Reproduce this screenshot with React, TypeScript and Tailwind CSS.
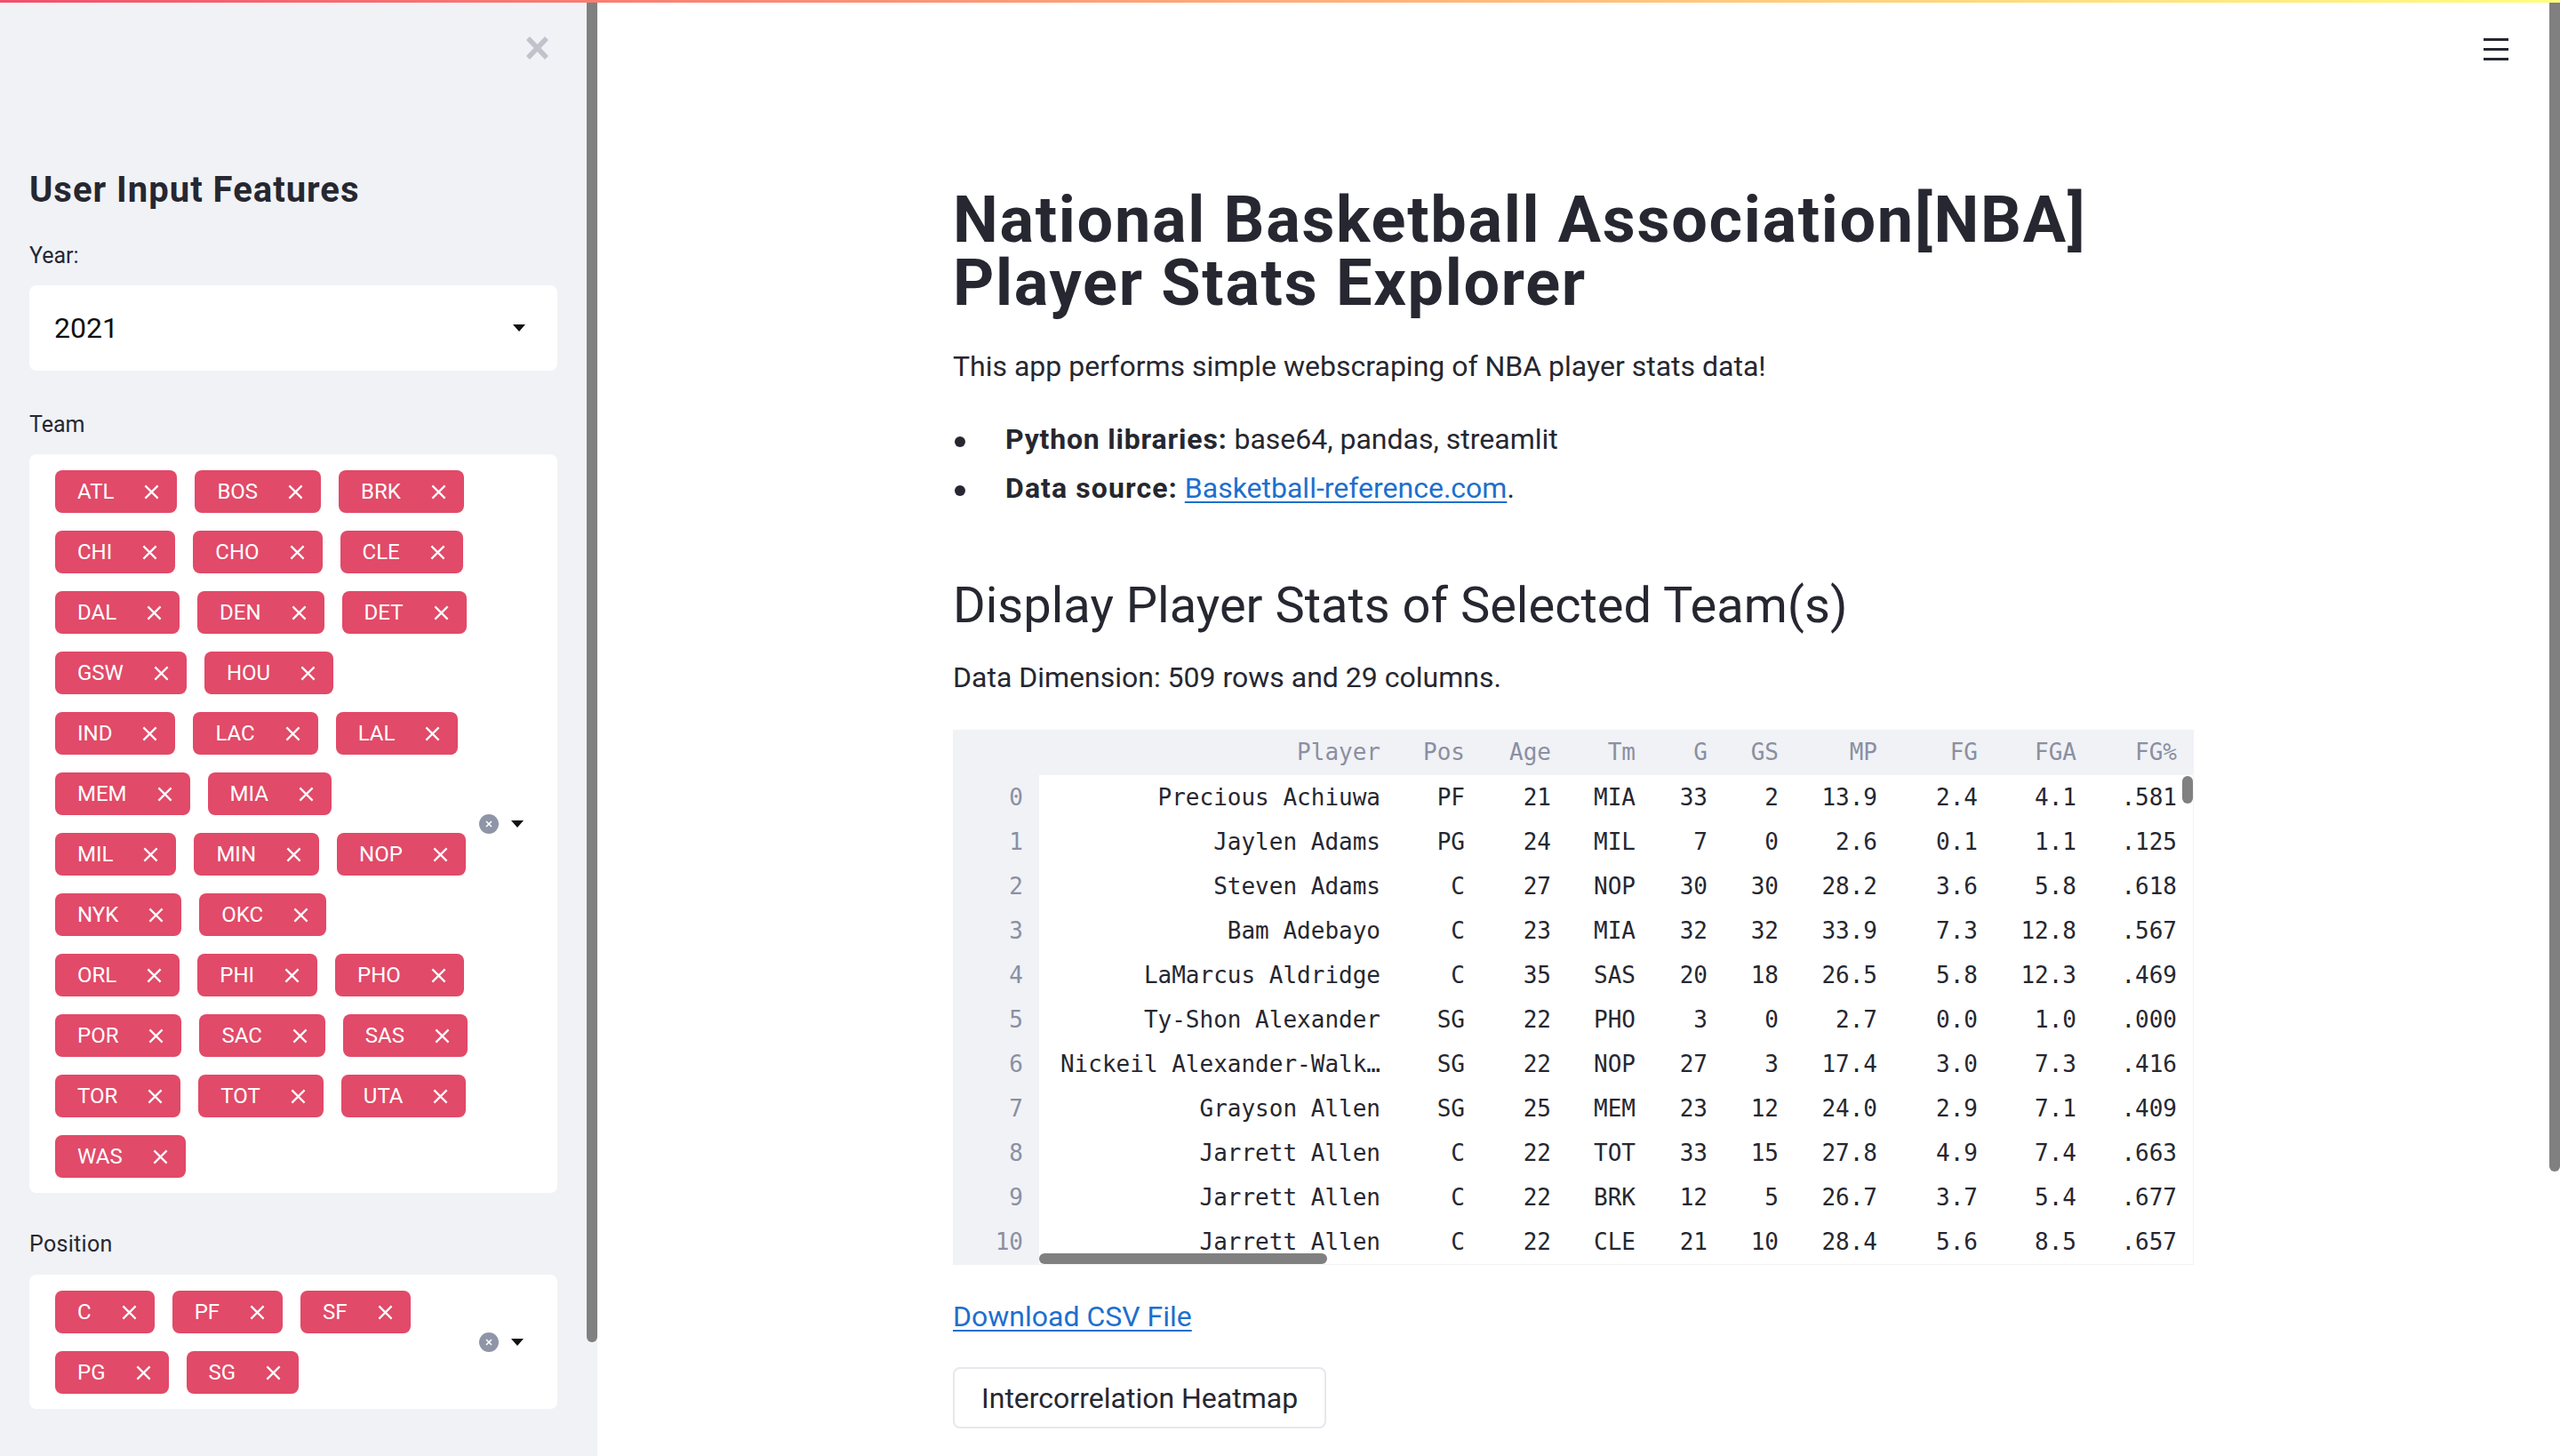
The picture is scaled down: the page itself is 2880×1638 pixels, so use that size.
import React from "react";

const teamRows: string[][] = [
  ["ATL", "BOS", "BRK"],
  ["CHI", "CHO", "CLE"],
  ["DAL", "DEN", "DET"],
  ["GSW", "HOU"],
  ["IND", "LAC", "LAL"],
  ["MEM", "MIA"],
  ["MIL", "MIN", "NOP"],
  ["NYK", "OKC"],
  ["ORL", "PHI", "PHO"],
  ["POR", "SAC", "SAS"],
  ["TOR", "TOT", "UTA"],
  ["WAS"],
];

const posRows: string[][] = [
  ["C", "PF", "SF"],
  ["PG", "SG"],
];

const cols: { name: string; cls: string }[] = [
  { name: "Player", cls: "w-[402px]" },
  { name: "Pos", cls: "w-[95px]" },
  { name: "Age", cls: "w-[97px]" },
  { name: "Tm", cls: "w-[95px]" },
  { name: "G", cls: "w-[81px]" },
  { name: "GS", cls: "w-[80px]" },
  { name: "MP", cls: "w-[111px]" },
  { name: "FG", cls: "w-[113px]" },
  { name: "FGA", cls: "w-[111px]" },
  { name: "FG%", cls: "w-[113px]" },
];

const rows: string[][] = [
  ["Precious Achiuwa", "PF", "21", "MIA", "33", "2", "13.9", "2.4", "4.1", ".581"],
  ["Jaylen Adams", "PG", "24", "MIL", "7", "0", "2.6", "0.1", "1.1", ".125"],
  ["Steven Adams", "C", "27", "NOP", "30", "30", "28.2", "3.6", "5.8", ".618"],
  ["Bam Adebayo", "C", "23", "MIA", "32", "32", "33.9", "7.3", "12.8", ".567"],
  ["LaMarcus Aldridge", "C", "35", "SAS", "20", "18", "26.5", "5.8", "12.3", ".469"],
  ["Ty-Shon Alexander", "SG", "22", "PHO", "3", "0", "2.7", "0.0", "1.0", ".000"],
  ["Nickeil Alexander-Walk\u2026", "SG", "22", "NOP", "27", "3", "17.4", "3.0", "7.3", ".416"],
  ["Grayson Allen", "SG", "25", "MEM", "23", "12", "24.0", "2.9", "7.1", ".409"],
  ["Jarrett Allen", "C", "22", "TOT", "33", "15", "27.8", "4.9", "7.4", ".663"],
  ["Jarrett Allen", "C", "22", "BRK", "12", "5", "26.7", "3.7", "5.4", ".677"],
  ["Jarrett Allen", "C", "22", "CLE", "21", "10", "28.4", "5.6", "8.5", ".657"],
];

function Pill({ label }: { label: string }) {
  return (
    <div className="flex h-[48px] items-center rounded-[8px] bg-[#e14a68] pl-[25px] pr-[19px] text-[24px] leading-none text-white">
      <span>{label}</span>
      <svg viewBox="0 0 20 20" className="ml-[33px] h-[19px] w-[19px]">
        <path d="M2.5 2.5 L17.5 17.5 M17.5 2.5 L2.5 17.5" stroke="white" strokeWidth="2.4" fill="none" />
      </svg>
    </div>
  );
}

function ClearAndArrow() {
  return (
    <div className="flex items-center gap-[14px] pr-[38px]">
      <div className="flex h-[22px] w-[22px] items-center justify-center rounded-full bg-[#8f95a6]">
        <svg viewBox="0 0 10 10" className="h-[10px] w-[10px]">
          <path d="M2 2 L8 8 M8 2 L2 8" stroke="white" strokeWidth="1.6" fill="none" />
        </svg>
      </div>
      <svg viewBox="0 0 14 8" className="h-[8px] w-[14px]">
        <polygon points="0,0 14,0 7,8" fill="#111111" />
      </svg>
    </div>
  );
}

function MultiSelect({ data }: { data: string[][] }) {
  return (
    <div className="flex rounded-[8px] bg-white">
      <div className="flex flex-1 flex-col gap-[20px] pb-[17px] pl-[29px] pt-[18px]">
        {data.map((r, i) => (
          <div key={i} className="flex gap-[20px]">
            {r.map((p) => (
              <Pill key={p} label={p} />
            ))}
          </div>
        ))}
      </div>
      <ClearAndArrow />
    </div>
  );
}

function Sidebar() {
  return (
    <aside className="flex h-full w-[672px] shrink-0 bg-[#f0f2f6]">
      <div className="flex w-[660px] flex-col px-[33px] pt-[40px]">
        <div className="flex h-[28px] justify-end pr-[8px]">
          <svg viewBox="0 0 29 28" className="h-[28px] w-[29px]">
            <path d="M4 3 L25 25 M25 3 L4 25" stroke="#c0c3cb" strokeWidth="5.5" fill="none" />
          </svg>
        </div>
        <h2 className="mt-[122px] text-[40px] font-bold leading-[48px] tracking-[1px] text-[#262730]">User Input Features</h2>
        <div className="mt-[32px] text-[25px] leading-[36px] text-[#262730]">Year:</div>
        <div className="mt-[15px] flex h-[96px] items-center justify-between rounded-[8px] bg-white pl-[28px] pr-[36px]">
          <span className="text-[32px] text-[#111111]">2021</span>
          <svg viewBox="0 0 14 8" className="h-[8px] w-[14px]">
            <polygon points="0,0 14,0 7,8" fill="#111111" />
          </svg>
        </div>
        <div className="mt-[43px] text-[25px] leading-[36px] text-[#262730]">Team</div>
        <div className="mt-[15px]">
          <MultiSelect data={teamRows} />
        </div>
        <div className="mt-[40px] text-[25px] leading-[36px] tracking-[0.3px] text-[#262730]">Position</div>
        <div className="mt-[16px]">
          <MultiSelect data={posRows} />
        </div>
      </div>
      <div className="w-[12px] pt-[3px]">
        <div className="h-[1507px] w-[12px] rounded-b-full bg-[#808080]" />
      </div>
    </aside>
  );
}

function DataTable() {
  return (
    <div className="relative mt-[35px] h-[602px] w-[1396px] overflow-hidden bg-[#f0f2f6] [font-family:'DejaVu_Sans_Mono',monospace] text-[26px]">
      <div className="flex h-[51px] items-center bg-[#f0f2f6] text-[#8b8fa1]">
        <div className="h-full w-[97px] shrink-0" />
        {cols.map((c) => (
          <div key={c.name} className={`${c.cls} flex h-full shrink-0 items-center justify-end pr-[18px]`}>
            {c.name}
          </div>
        ))}
      </div>
      {rows.map((r, i) => (
        <div key={i} className="flex h-[50px] items-center">
          <div className="flex h-full w-[97px] shrink-0 items-center justify-end bg-[#f0f2f6] pr-[18px] text-[#8b8fa1]">
            {i}
          </div>
          {r.map((v, j) => (
            <div
              key={j}
              className={`${cols[j].cls} flex h-full shrink-0 items-center justify-end whitespace-nowrap bg-white pr-[18px] text-[#262730]`}
            >
              {v}
            </div>
          ))}
        </div>
      ))}
      <div className="absolute bottom-[1px] left-[97px] h-[12px] w-[324px] rounded-full bg-[#808080]" />
      <div className="absolute right-[1px] top-[52px] h-[31px] w-[12px] rounded-full bg-[#808080]" />
    </div>
  );
}

function Main() {
  return (
    <main className="relative h-full flex-1 overflow-hidden bg-white">
      <div className="absolute right-[46px] top-[43px] flex w-[28px] flex-col gap-[8px]">
        <div className="h-[3px] w-[28px] bg-[#262730]" />
        <div className="h-[3px] w-[28px] bg-[#262730]" />
        <div className="h-[3px] w-[28px] bg-[#262730]" />
      </div>
      <div className="flex justify-center">
        <div className="flex w-[1396px] flex-col pt-[212px] text-[#262730]">
          <h1 className="text-[72px] font-bold leading-[71px] tracking-[1.7px]">
            National Basketball Association[NBA]
            <br />
            Player Stats Explorer
          </h1>
          <p className="mt-[34px] text-[32px] leading-[48px]">
            This app performs simple webscraping of NBA player stats data!
          </p>
          <ul className="mt-[34px] flex flex-col gap-[7px] text-[32px] leading-[48px]">
            <li className="flex items-center">
              <span className="ml-[2px] mt-[5px] h-[12px] w-[12px] rounded-full bg-[#262730]" />
              <span className="ml-[45px]">
                <strong className="font-bold tracking-[0.8px]">Python libraries:</strong> base64, pandas, streamlit
              </span>
            </li>
            <li className="flex items-center">
              <span className="ml-[2px] mt-[5px] h-[12px] w-[12px] rounded-full bg-[#262730]" />
              <span className="ml-[45px]">
                <strong className="font-bold tracking-[1.1px]">Data source:</strong>{" "}
                <a className="text-[#1e6fcd] underline decoration-2 underline-offset-[4px]">Basketball-reference.com</a>.
              </span>
            </li>
          </ul>
          <h2 className="mt-[74px] text-[56px] font-normal leading-[68px]">Display Player Stats of Selected Team(s)</h2>
          <p className="mt-[23px] text-[32px] leading-[48px]">Data Dimension: 509 rows and 29 columns.</p>
          <DataTable />
          <div className="mt-[34px] text-[32px] leading-[48px]">
            <a className="text-[#1e6fcd] underline decoration-2 underline-offset-[4px]">Download CSV File</a>
          </div>
          <div className="mt-[33px]">
            <button className="h-[69px] rounded-[8px] border-2 border-[#e6e8ee] bg-white px-[30px] text-[32px] text-[#262730]">
              Intercorrelation Heatmap
            </button>
          </div>
        </div>
      </div>
    </main>
  );
}

export default function App() {
  return (
    <div className="relative flex h-[1638px] w-[2880px] overflow-hidden bg-white [font-family:'Roboto',sans-serif]">
      <div className="absolute left-0 right-0 top-0 z-10 h-[3px] bg-gradient-to-r from-[#f0506d] to-[#fffd80]" />
      <Sidebar />
      <Main />
      <div className="h-full w-[12px] shrink-0 bg-white pt-[3px]">
        <div className="h-[1315px] w-[12px] rounded-b-full bg-[#808080]" />
      </div>
    </div>
  );
}
